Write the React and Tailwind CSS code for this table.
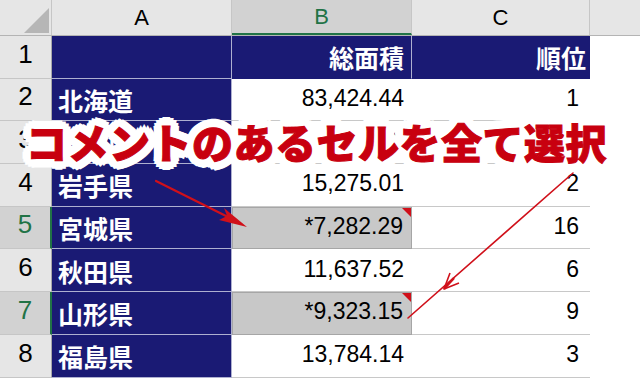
const rows = [
  { n: 1, a: '', b: '総面積', c: '順位', head: true },
  { n: 2, a: '北海道', b: '83,424.44', c: '1' },
  { n: 3, a: '青森県', b: '*9,645.59', c: '8' },
  { n: 4, a: '岩手県', b: '15,275.01', c: '2' },
  { n: 5, a: '宮城県', b: '*7,282.29', c: '16', note: true },
  { n: 6, a: '秋田県', b: '11,637.52', c: '6' },
  { n: 7, a: '山形県', b: '*9,323.15', c: '9', note: true },
  { n: 8, a: '福島県', b: '13,784.14', c: '3' },
]

const jp = "font-['Noto_Sans_CJK_JP',sans-serif]"
const num = "font-['Liberation_Sans',Arial,sans-serif]"

const Arrows = () => (
  <svg className="absolute inset-0 pointer-events-none" width="640" height="379" viewBox="0 0 640 379">
    <line x1="156" y1="181" x2="228" y2="217" stroke="#d0101a" strokeWidth="2.2" strokeLinecap="round" />
    <polygon points="247,227 224,208 227,216 219,220" fill="#d0101a" />
    <line x1="573" y1="173" x2="408" y2="318" stroke="#d0101a" strokeWidth="1.6" strokeLinecap="round" />
    <polyline points="459,283 444,289 450,273" fill="none" stroke="#d0101a" strokeWidth="1.6" strokeLinejoin="round" />
    <line x1="444" y1="289" x2="454" y2="278" stroke="#d0101a" strokeWidth="2.5" />
  </svg>
)

// rounded white outline built from a ring of shadows
const Title = () => (
  <div
    className={`absolute left-[26px] top-[115px] ${jp} text-[41px] tracking-[0.5px] font-black leading-[52px] whitespace-nowrap text-[#c8000f] [-webkit-text-stroke:1px_#c8000f] [text-shadow:9px_0_0_#fff,8.3px_3.4px_0_#fff,6.4px_6.4px_0_#fff,3.4px_8.3px_0_#fff,0_9px_0_#fff,-3.4px_8.3px_0_#fff,-6.4px_6.4px_0_#fff,-8.3px_3.4px_0_#fff,-9px_0_0_#fff,-8.3px_-3.4px_0_#fff,-6.4px_-6.4px_0_#fff,-3.4px_-8.3px_0_#fff,0_-9px_0_#fff,3.4px_-8.3px_0_#fff,6.4px_-6.4px_0_#fff,8.3px_-3.4px_0_#fff,5px_0_0_#fff,3.5px_3.5px_0_#fff,0_5px_0_#fff,-3.5px_3.5px_0_#fff,-5px_0_0_#fff,-3.5px_-3.5px_0_#fff,0_-5px_0_#fff,3.5px_-3.5px_0_#fff,2px_0_0_#fff,-2px_0_0_#fff,0_2px_0_#fff,0_-2px_0_#fff]`}
  >
    コメントのあるセルを全て選択
  </div>
)

export default function App() {
  return (
    <div className="relative w-[640px] h-[379px] overflow-hidden bg-white">
      {/* column headers */}
      <div className={`flex h-[36px] bg-[#e6e6e6] border-b border-[#b4b4b4] ${num} text-[22px] text-black`}>
        <div className="relative w-[52px] shrink-0 border-r border-[#c6c6c6]">
          <svg className="absolute left-0 top-0" width="52" height="36">
            <polygon points="49,8 49,33 24,33" fill="#b6b6b6" />
          </svg>
        </div>
        <div className="w-[180px] shrink-0 flex items-center justify-center border-r border-[#c6c6c6]">A</div>
        <div className="w-[180px] shrink-0 flex items-center justify-center bg-[#d2d2d2] border-r border-[#c6c6c6] border-b-2 border-b-[#217346] text-[#217346]">B</div>
        <div className="w-[178px] shrink-0 flex items-center justify-center border-r border-[#c6c6c6]">C</div>
        <div className="flex-1" />
      </div>

      {rows.map((r) => (
        <div key={r.n} className="flex h-[42.7px]">
          <div
            className={`w-[52px] shrink-0 flex items-end justify-center pb-[4px] ${num} text-[26px] border-b border-[#c6c6c6] ${
              r.note
                ? 'bg-[#d2d2d2] text-[#217346] border-r-2 border-r-[#217346]'
                : 'bg-[#e6e6e6] text-black border-r border-r-[#a8a8a8]'
            }`}
          >
            {r.n}
          </div>
          <div className={`w-[180px] shrink-0 flex items-center pl-[6px] pt-[2px] bg-[#1a1a74] border-b border-[#aeb0d0] border-r border-r-[#aeb0d0] text-white font-bold text-[25px] ${jp}`}>
            {r.a}
          </div>
          {r.head ? (
            <>
              <div className={`w-[180px] shrink-0 flex items-center justify-end pr-[7px] pt-[2px] bg-[#1a1a74] border-b border-[#1a1a74] border-r border-r-[#aeb0d0] text-white font-bold text-[25px] ${jp}`}>
                {r.b}
              </div>
              <div className={`w-[178px] shrink-0 flex items-center justify-end pr-[4px] pt-[2px] bg-[#1a1a74] border-b border-[#1a1a74] text-white font-bold text-[25px] ${jp}`}>
                {r.c}
              </div>
            </>
          ) : (
            <>
              <div
                className={`relative w-[180px] shrink-0 flex items-end justify-end pr-[8px] pb-[5px] ${num} text-[23px] text-black ${
                  r.note ? 'bg-[#c8c8c8] border border-[#a6a6a6]' : 'border-b border-[#c8c8c8]'
                }`}
              >
                {r.b}
                {r.note && (
                  <span className="absolute right-0 top-0 w-0 h-0 border-l-[9px] border-l-transparent border-t-[9px] border-t-[#d0101a]" />
                )}
              </div>
              <div className={`w-[178px] shrink-0 flex items-end justify-end pr-[11px] pb-[5px] ${num} text-[23px] text-black border-b border-[#c8c8c8]`}>
                {r.c}
              </div>
            </>
          )}
          <div className="flex-1" />
        </div>
      ))}

      <Title />
      <Arrows />
    </div>
  )
}
